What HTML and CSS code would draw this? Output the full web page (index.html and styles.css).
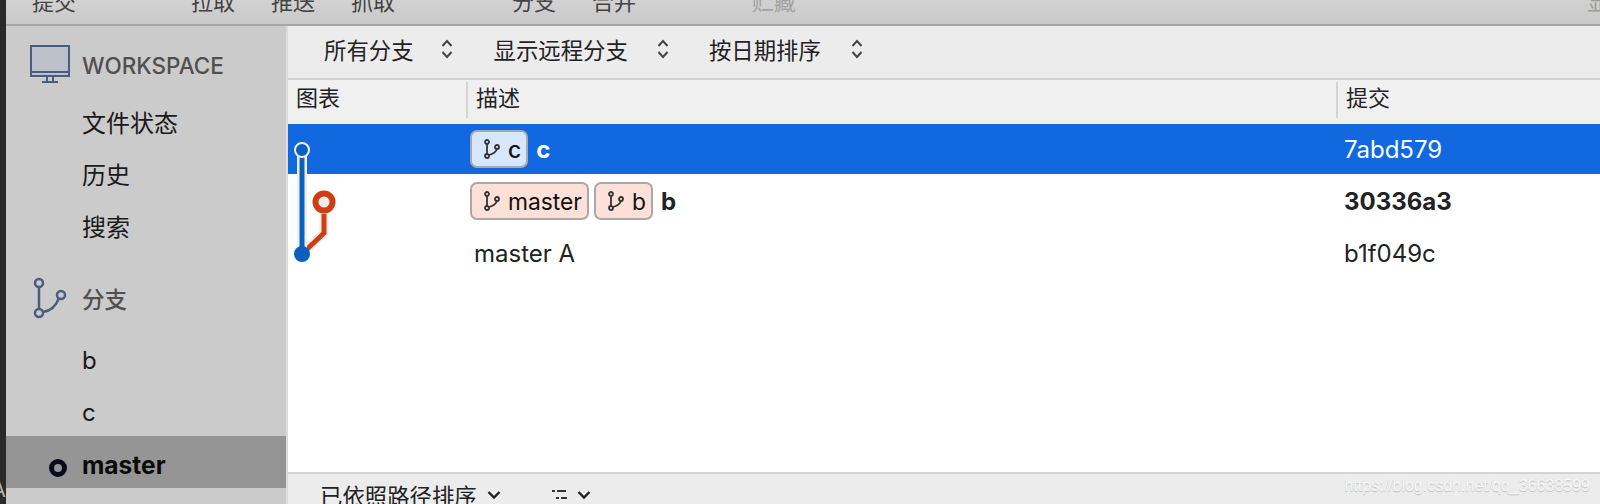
FILE: index.html
```html
<!DOCTYPE html>
<html lang="zh-CN">
<head>
<meta charset="utf-8">
<title>SourceTree</title>
<link rel="stylesheet" href="styles.css">
</head>
<body>
<div class="app">
  <div class="strip"><span class="strip-a">A</span></div>
  <div class="window">
    <header class="toolbar">
      <span class="tool t-commit">提交</span>
      <span class="tool t-pull">拉取</span>
      <span class="tool t-push">推送</span>
      <span class="tool t-fetch">抓取</span>
      <span class="tool t-branch">分支</span>
      <span class="tool t-merge">合并</span>
      <span class="tool t-stash">贮藏</span>
      <span class="tool t-show">显</span>
    </header>
    <div class="content">
      <nav class="sidebar">
        <div class="section sec-ws">
          <svg class="sec-icon" width="44" height="40" viewBox="0 0 44 40"><rect x="3" y="1" width="38" height="30" fill="#bcc0c9" stroke="#4a5d80" stroke-width="2"/><path d="M3 27h38M19 31v5M25 31v5M14 37h16" fill="none" stroke="#4a5d80" stroke-width="2"/></svg>
          <span class="sec-title">WORKSPACE</span>
        </div>
        <div class="item">文件状态</div>
        <div class="item">历史</div>
        <div class="item">搜索</div>
        <div class="section sec-br">
          <svg class="sec-icon" width="44" height="44" viewBox="0 0 44 44"><g fill="none" stroke="#4a5d80" stroke-width="2.500"><circle cx="11" cy="7" r="4"/><circle cx="11" cy="37" r="4"/><circle cx="33" cy="19" r="4"/><path d="M11 11v22M15 36c8-1 13-6 16-14"/></g></svg>
          <span class="sec-title">分支</span>
        </div>
        <div class="item">b</div>
        <div class="item">c</div>
        <div class="item current"><span class="dot"></span>master</div>
      </nav>
      <main class="main">
        <div class="filters">
          <span class="filter f-all">所有分支<svg class="updown" width="12" height="20" viewBox="0 0 12 20"><path d="M1.500 7L6 2l4.500 5M1.500 13L6 18l4.500-5" fill="none" stroke="#444" stroke-width="2"/></svg></span>
          <span class="filter f-remote">显示远程分支<svg class="updown" width="12" height="20" viewBox="0 0 12 20"><path d="M1.500 7L6 2l4.500 5M1.500 13L6 18l4.500-5" fill="none" stroke="#444" stroke-width="2"/></svg></span>
          <span class="filter f-date">按日期排序<svg class="updown" width="12" height="20" viewBox="0 0 12 20"><path d="M1.500 7L6 2l4.500 5M1.500 13L6 18l4.500-5" fill="none" stroke="#444" stroke-width="2"/></svg></span>
        </div>
        <div class="thead">
          <div class="th">图表</div>
          <div class="th">描述</div>
          <div class="th">提交</div>
        </div>
        <div class="tbody">
          <svg class="graph" width="60" height="160" viewBox="0 0 60 160">
            <path d="M36 90v19L14 130" fill="none" stroke="#ececec" stroke-width="9"/>
            <path d="M36 90v19L14 130" fill="none" stroke="#cf3e12" stroke-width="5"/>
            <path d="M14 26v104" fill="none" stroke="#f0f0f0" stroke-width="10"/>
            <path d="M14 26v104" fill="none" stroke="#0c60bd" stroke-width="5"/>
            <circle cx="14" cy="26" r="7" fill="#0c60bd" stroke="#f0f0f0" stroke-width="2"/>
            <circle cx="36" cy="78" r="8.500" fill="#ececec" stroke="#cf3e12" stroke-width="6"/>
            <circle cx="14" cy="130" r="8" fill="#0c60bd"/>
          </svg>
          <div class="row selected">
            <div class="cell"></div>
            <div class="cell desc">
              <span class="pill blue"><svg class="pill-icon" width="18" height="20" viewBox="0 0 18 20"><g fill="none" stroke="#333" stroke-width="1.800"><circle cx="4" cy="3" r="2"/><circle cx="4" cy="17" r="2"/><circle cx="14" cy="8" r="2"/><path d="M4 5v10M6 16c4-1 7-3 8-6"/></g></svg>c</span>
              <b class="msg">c</b>
            </div>
            <div class="cell hash">7abd579</div>
          </div>
          <div class="row">
            <div class="cell"></div>
            <div class="cell desc">
              <span class="pill red"><svg class="pill-icon" width="18" height="20" viewBox="0 0 18 20"><g fill="none" stroke="#333" stroke-width="1.800"><circle cx="4" cy="3" r="2"/><circle cx="4" cy="17" r="2"/><circle cx="14" cy="8" r="2"/><path d="M4 5v10M6 16c4-1 7-3 8-6"/></g></svg>master</span>
              <span class="pill red"><svg class="pill-icon" width="18" height="20" viewBox="0 0 18 20"><g fill="none" stroke="#333" stroke-width="1.800"><circle cx="4" cy="3" r="2"/><circle cx="4" cy="17" r="2"/><circle cx="14" cy="8" r="2"/><path d="M4 5v10M6 16c4-1 7-3 8-6"/></g></svg>b</span>
              <b class="msg">b</b>
            </div>
            <div class="cell hash head">30336a3</div>
          </div>
          <div class="row">
            <div class="cell"></div>
            <div class="cell desc plain">master A</div>
            <div class="cell hash">b1f049c</div>
          </div>
        </div>
        <footer class="footer">
          <span class="sort">已依照路径排序</span>
          <svg class="chev chev-a" width="14" height="10" viewBox="0 0 14 10"><path d="M1.500 2L7 7.500 12.500 2" fill="none" stroke="#222" stroke-width="2.400"/></svg>
          <svg class="list" width="18" height="20" viewBox="0 0 18 20"><path d="M1 2h3M6 2h9M5 9h3M10 9h6M5 16h3M10 16h6" fill="none" stroke="#333" stroke-width="2"/></svg>
          <svg class="chev chev-b" width="14" height="10" viewBox="0 0 14 10"><path d="M1.500 2L7 7.500 12.500 2" fill="none" stroke="#222" stroke-width="2.400"/></svg>
          <span class="watermark">https://blog.csdn.net/qq_36638599</span>
        </footer>
      </main>
    </div>
  </div>
</div>
</body>
</html>
```
FILE: styles.css
```css
* { box-sizing: border-box; }
html, body { margin: 0; height: 504px; overflow: hidden; }
body { font-family: Inter, "Noto Sans CJK SC", sans-serif; font-size: 22px; color: #222; background: #fff; }
svg { display: block; flex: none; }

.app { display: flex; height: 504px; }
.strip { width: 6px; background: #2a2a2a; overflow: hidden; display: flex; align-items: flex-end; padding-bottom: 2px; }
.strip-a { color: #b5b5b5; font-size: 20px; line-height: 24px; margin-left: -8px; }
.window { flex: 1; min-width: 0; display: flex; flex-direction: column; }

.toolbar { height: 26px; flex: none; display: flex; align-items: flex-start; overflow: hidden; background: linear-gradient(#d2d2d2, #c9c9c9); border-bottom: 2px solid #a6a6a6; }
.tool { color: #444; line-height: 26px; margin-top: -11px; white-space: nowrap; }
.t-commit { margin-left: 26px; }
.t-pull { margin-left: 115px; }
.t-push { margin-left: 36px; }
.t-fetch { margin-left: 36px; }
.t-branch { margin-left: 117px; }
.t-merge { margin-left: 36px; }
.t-stash { margin-left: 116px; color: #a2a2a2; }
.t-show { margin-left: auto; margin-right: -9px; color: #999; }

.content { flex: 1; min-height: 0; display: flex; }

.sidebar { width: 282px; flex: none; background: #cbcbcb; border-right: 2px solid #dcdcdc; padding-top: 13px; }
.section { display: flex; align-items: center; height: 52px; padding-left: 22px; }
.sec-icon { margin-right: 10px; }
.sec-title { font-weight: 500; color: #505050; font-size: 22.500px; }
.sec-ws { margin-bottom: 6px; }
.sec-br { margin-top: 19px; margin-bottom: 10px; }
.item { height: 52px; line-height: 54px; padding-left: 76px; color: #1a1a1a; font-size: 24px; }
.current { background: #959595; font-weight: 700; color: #0a0a0a; line-height: 58px; margin-top: -2px; display: flex; align-items: flex-start; padding-left: 43px; font-size: 24.500px; }
.dot { width: 18px; height: 18px; border: 5px solid #0a0a1a; border-radius: 50%; margin-right: 15px; margin-top: 23px; }

.main { flex: 1; min-width: 0; display: flex; flex-direction: column; background: #fff; }

.filters { height: 54px; flex: none; display: flex; align-items: center; background: #ececec; border-bottom: 2px solid #d0d0d0; padding-bottom: 6px; font-size: 22.400px; }
.filter { display: flex; align-items: center; }
.updown { margin-left: 30px; }
.f-all { margin-left: 36px; }
.f-all .updown { margin-left: 27px; }
.f-remote { margin-left: 41px; }
.f-remote .updown { margin-left: 29px; }
.f-date { margin-left: 40px; }

.thead { height: 44px; flex: none; display: grid; grid-template-columns: 178px 870px 1fr; background: #f0f0f0; padding: 2px 0 6px; }
.th { padding-left: 8px; line-height: 32px; }
.th + .th { border-left: 2px solid #d4d4d4; }

.tbody { flex: 1; min-height: 0; position: relative; }
.graph { position: absolute; left: 0; top: 0; z-index: 1; }
.row { height: 52px; display: grid; grid-template-columns: 179px 870px 1fr; align-items: center; border-bottom: 2px solid transparent; background-clip: padding-box; font-size: 24px; }
.selected { background-color: #1268df; color: #fff; }
.desc { display: flex; align-items: center; padding-left: 3px; }
.plain { padding-left: 7px; }
.hash { padding-left: 7px; }
.head { font-weight: 700; }
.msg { margin-left: 9px; font-weight: 700; }
.pill { display: flex; align-items: center; height: 38px; border: 2px solid #a8a8a8; border-radius: 7px; padding: 0 5px 0 11px; color: #111; margin-right: 5px; font-size: 22.800px; }
.pill + .msg { margin-left: 3px; }
.pill-icon { margin-right: 7px; }
.blue { background: #d6e6fc; font-weight: 500; }
.red { background: #fde0d8; }

.footer { height: 32px; flex: none; display: flex; align-items: flex-start; background: #ececec; border-top: 2px solid #d4d4d4; overflow: hidden; position: relative; }
.sort { margin-left: 32px; line-height: 26px; margin-top: 10px; font-size: 22.400px; }
.chev { margin-top: 16px; }
.chev-a { margin-left: 10px; }
.list { margin-left: 50px; margin-top: 15px; }
.chev-b { margin-left: 8px; }
.watermark { position: absolute; right: 10px; top: 0; font-family: "Liberation Sans", sans-serif; font-size: 16px; line-height: 24px; color: #f6f6f6; text-shadow: 0 1px 1px #bdbdbd; }
```
